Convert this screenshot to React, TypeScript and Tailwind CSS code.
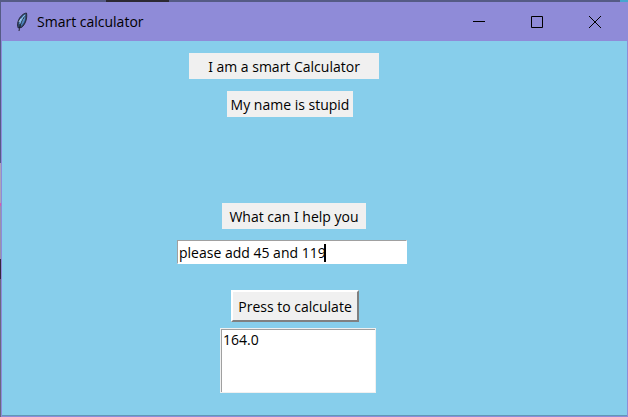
import { useState } from "react";

const label = "flex h-[26px] items-center justify-center bg-[#f0f0f0]";

function Feather() {
  return (
    <svg width="14" height="20" viewBox="0 0 14 20" aria-hidden="true">
      <path d="M11.500 1C8.500 1.200 4.500 4.500 3 9.500C2.300 12 2.300 14 3.200 16L6.500 15.500C10.500 12.500 12.500 6 11.500 1Z" fill="#30496b" stroke="#1a1d2b" strokeWidth="0.800" />
      <path d="M10.300 2.300C7.500 4 5.200 7 4.200 11.500L5.700 12.500L9.500 8Z" fill="#7dbcf0" />
      <path d="M10.400 5C10 9 8.500 12 6 14L5.200 13Z" fill="#4d86c0" />
      <path d="M9.500 4.500C7.500 8 5 12 4 19" fill="none" stroke="#17171f" strokeWidth="0.900" />
      <path d="M6 6.500L4 10" stroke="#c8d4e6" strokeWidth="0.900" />
    </svg>
  );
}

function TitleBar() {
  const button = "flex h-full w-[58px] items-center justify-center";
  return (
    <header className="flex h-[39px] items-center bg-[#8f8bd8] pr-[3px] pl-[13px]">
      <Feather />
      <h1 className="ml-2 text-[14px] leading-5">Smart calculator</h1>
      <div className="ml-auto flex h-full items-center">
        <button type="button" aria-label="Minimize" className={button}>
          <svg width="12" height="12" viewBox="0 0 12 12"><path d="M0 5.500H12" stroke="black" /></svg>
        </button>
        <button type="button" aria-label="Maximize" className={button}>
          <svg width="12" height="12" viewBox="0 0 12 12"><path d="M0.500 0.500H11.500V11.500H0.500Z" fill="none" stroke="black" /></svg>
        </button>
        <button type="button" aria-label="Close" className={button}>
          <svg width="12" height="12" viewBox="0 0 12 12"><path d="M0 0L12 12M12 0L0 12" stroke="black" /></svg>
        </button>
      </div>
    </header>
  );
}

export default function App() {
  const [query, setQuery] = useState("please add 45 and 119");
  const [result, setResult] = useState("164.0");

  const calculate = () => {
    const numbers = (query.match(/\d+(\.\d+)?/g) ?? []).map(Number);
    setResult(numbers.reduce((sum, n) => sum + n, 0).toFixed(1));
  };

  return (
    <div className="flex min-h-screen flex-col bg-[#555b85] [font-family:'Open_Sans',sans-serif] [font-feature-settings:'salt','ss01','ss02','ss03'] text-[14px] text-black">
      <div className="flex h-[2px] justify-end">
        <div className="mr-auto ml-[106px] w-[63px] bg-[#2c2932]" />
        <div className="w-[8px] bg-[#47a6ce]" />
      </div>
      <div className="flex flex-1">
        <div className="flex w-px flex-col">
          <div className="h-[161px] bg-[#555b85]" />
          <div className="h-[40px] bg-[#aaa5b5]" />
          <div className="h-[3px] bg-[#d65cb0]" />
          <div className="h-[53px] bg-[#9793a8]" />
          <div className="h-[20px] bg-[#35283a]" />
          <div className="flex-1 bg-[#68687c]" />
        </div>
        <div className="flex flex-1 flex-col border-r border-b border-l border-[#8f8bd8]">
          <TitleBar />
          <main className="flex flex-1 flex-col items-start border-b border-[#6299b6] bg-[#87ceeb] pt-3 pl-[175px]">
            <p className={`${label} ml-3 w-[190px]`}>I am a smart Calculator</p>
            <p className={`${label} mt-3 ml-[50px] w-[126px]`}>My name is stupid</p>
            <label htmlFor="query" className={`${label} mt-[86px] ml-[45px] w-[144px]`}>
              What can I help you
            </label>
            <div className="relative mt-[11px] w-[230px]">
              <input
                id="query"
                value={query}
                onChange={(e) => setQuery(e.target.value)}
                className="block h-6 w-full border border-t-[#a0a0a0] border-r-white border-b-white border-l-[#a0a0a0] bg-white px-px outline-none"
              />
              <span className="absolute top-1 left-[147px] h-[18px] w-[2px] bg-black" />
            </div>
            <button
              type="button"
              onClick={calculate}
              className="mt-[26px] ml-[54px] flex h-8 w-32 items-center justify-center border-2 border-t-white border-r-[#808080] border-b-[#808080] border-l-white bg-[#f0f0f0]"
            >
              Press to calculate
            </button>
            <textarea
              aria-label="Result"
              readOnly
              value={result}
              className="mt-[6px] ml-[43px] h-[65px] w-[156px] resize-none overflow-hidden border border-[#f0f0f0] bg-white px-[2px] py-px leading-5 shadow-[inset_1px_1px_0_#a0a0a0] outline-none"
            />
          </main>
        </div>
      </div>
    </div>
  );
}
